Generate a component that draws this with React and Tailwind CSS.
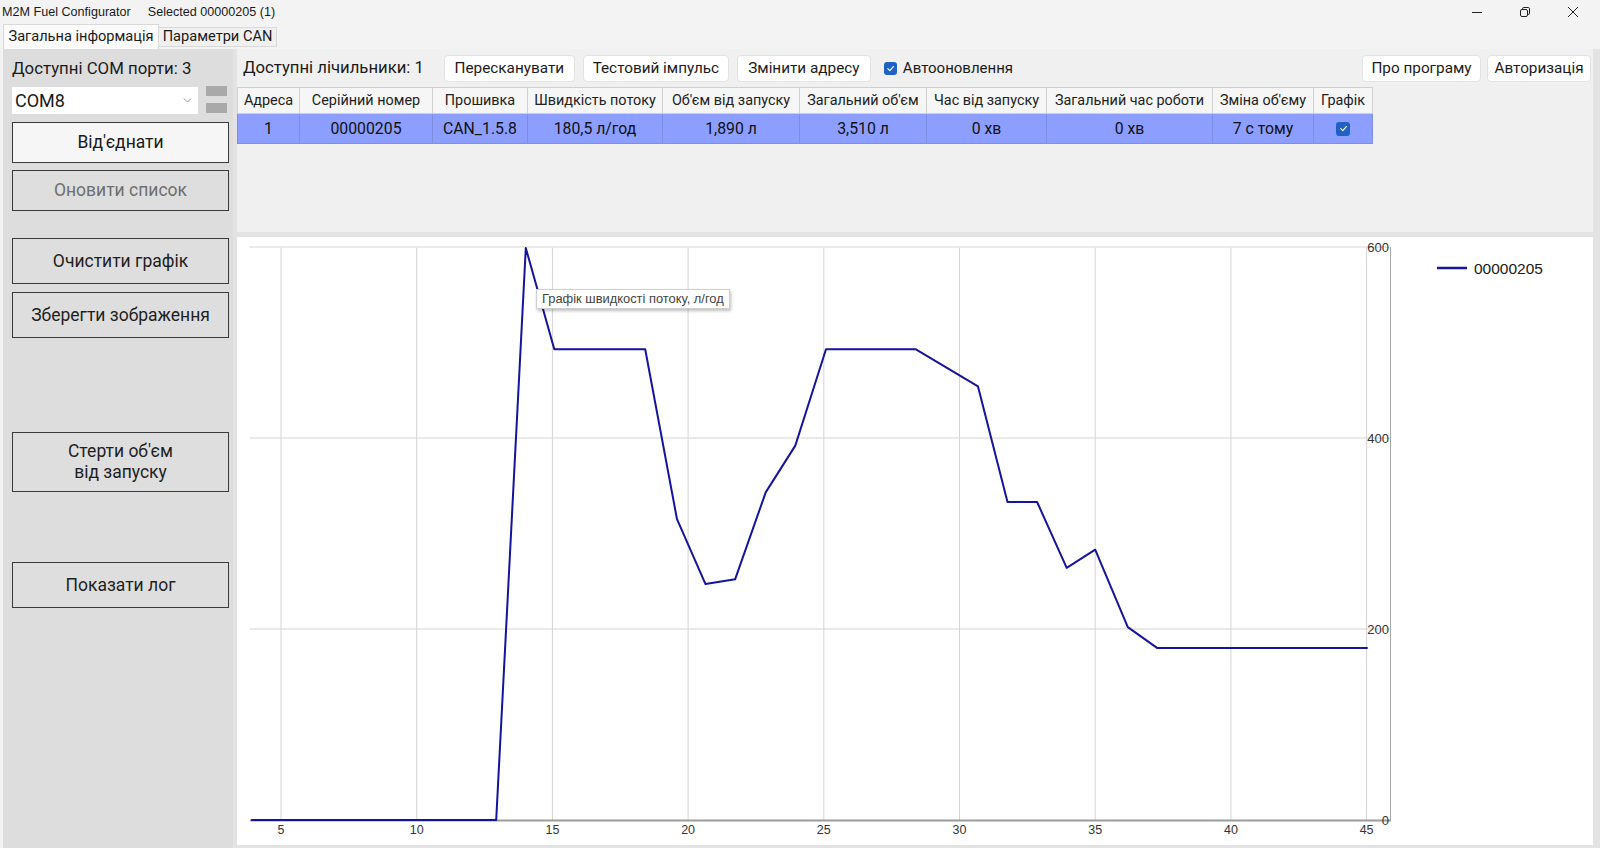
import { ChevronDown } from "lucide-react";

const columns = [
  { title: "Адреса", w: 62, value: "1" },
  { title: "Серійний номер", w: 133, value: "00000205" },
  { title: "Прошивка", w: 95, value: "CAN_1.5.8" },
  { title: "Швидкість потоку", w: 135, value: "180,5 л/год" },
  { title: "Об'єм від запуску", w: 137, value: "1,890 л" },
  { title: "Загальний об'єм", w: 127, value: "3,510 л" },
  { title: "Час від запуску", w: 120, value: "0 хв" },
  { title: "Загальний час роботи", w: 166, value: "0 хв" },
  { title: "Зміна об'єму", w: 101, value: "7 с тому" },
  { title: "Графік", w: 59, value: null },
];

// flow rate samples (x = seconds, y = l/h)
const samples = [
  [3.9, 0], [12.93, 0], [14.02, 599], [15.07, 493], [18.42, 493], [19.59, 315],
  [20.64, 247], [21.73, 252], [22.86, 343], [23.95, 392], [25.08, 493], [28.38, 493],
  [30.68, 454], [31.77, 333], [32.86, 333], [33.95, 264], [35.0, 283], [36.2, 202],
  [37.29, 180], [45.04, 180],
];

const px = (v) => 44 + (v - 5) * 27.14;
const py = (val) => 583 - val * 0.955;

function Check({ size = 13 }) {
  return (
    <div
      className="rounded-[3px] bg-[#1f62c4] flex items-center justify-center"
      style={{ width: size, height: size }}
    >
      <svg width="9" height="9" viewBox="0 0 10 10" fill="none">
        <path d="M2 5.2 L4.2 7.3 L8.2 2.8" stroke="white" strokeWidth="1.3" strokeLinecap="round" strokeLinejoin="round" />
      </svg>
    </div>
  );
}

function SideButton({ className = "", children, light, disabled }) {
  return (
    <button
      type="button"
      className={
        "w-[217px] border border-[#3a3a3a] flex items-center justify-center text-[17.5px] leading-[21px] text-center " +
        (light ? "bg-[#f6f6f6] text-[#1a1a1a] " : "bg-[#dedede] text-[#1f1f1f] ") +
        (disabled ? "!text-[#6e6e6e] " : "") +
        className
      }
    >
      {children}
    </button>
  );
}

function ToolButton({ w, children }) {
  return (
    <button
      type="button"
      className="h-[27px] bg-white rounded-[4px] border border-[#e2e2e2] text-[15.3px] text-[#1b1b1b] flex items-center justify-center"
      style={{ width: w }}
    >
      {children}
    </button>
  );
}

function Chart() {
  const xTicks = [5, 10, 15, 20, 25, 30, 35, 40, 45];
  const yTicks = [600, 400, 200];
  const d = samples.map(([v, val], i) => `${i ? "L" : "M"}${px(v).toFixed(1)} ${py(val).toFixed(1)}`).join(" ");
  return (
    <div className="relative h-[608px] w-[1356px] bg-white">
      <svg width="1356" height="608" className="block">
        {xTicks.map((t) => (
          <line key={t} x1={px(t)} x2={px(t)} y1={10.5} y2={583} stroke="#d4d4d4" strokeWidth="1" />
        ))}
        {yTicks.map((t) => (
          <line key={t} x1={13} x2={1153} y1={py(t)} y2={py(t)} stroke="#d4d4d4" strokeWidth="1" />
        ))}
        <line x1={1153.5} x2={1153.5} y1={10} y2={584} stroke="#a8a8a8" strokeWidth="1" />
        <line x1={13} x2={1154} y1={583.5} y2={583.5} stroke="#9c9c9c" strokeWidth="2" />
        {xTicks.map((t) => (
          <text key={t} x={px(t)} y={597} textAnchor="middle" fontSize="12.5" fill="#333" fontFamily="Liberation Sans, sans-serif">
            {t}
          </text>
        ))}
        {[600, 400, 200, 0].map((t) => (
          <text key={t} x={1152} y={py(t) + 4.5} textAnchor="end" fontSize="13" fill="#333" fontFamily="Liberation Sans, sans-serif">
            {t}
          </text>
        ))}
        <path d={d} fill="none" stroke="#14149c" strokeWidth="2" strokeLinejoin="round" />
        <line x1={1200} x2={1230} y1={31} y2={31} stroke="#14149c" strokeWidth="2.5" />
        <text x={1237} y={36.5} fontSize="15.5" fill="#1a1a1a" fontFamily="Liberation Sans, sans-serif">
          00000205
        </text>
      </svg>
      <div className="absolute left-[299px] top-[52px] h-[20px] bg-white border border-[#cfcfcf] shadow-[1px_2px_3px_rgba(0,0,0,0.25)] px-[5px] flex items-center text-[12.9px] text-[#444] font-['Liberation_Sans',sans-serif] whitespace-nowrap">
        Графік швидкості потоку, л/год
      </div>
    </div>
  );
}

export default function App() {
  return (
    <div className="w-[1600px] h-[848px] bg-[#f3f3f3] flex flex-col overflow-hidden font-['Roboto',sans-serif] text-[#1a1a1a]">
      {/* title bar */}
      <div className="h-[24px] flex items-center text-[12.6px] text-[#1a1a1a] font-['Liberation_Sans',sans-serif]">
        <span className="ml-[2px]">M2M Fuel Configurator</span>
        <span className="ml-[17px]">Selected 00000205 (1)</span>
        <div className="ml-auto mr-[3px] flex">
          <div className="w-[48px] h-[24px] flex items-center justify-center">
            <svg width="10" height="10" viewBox="0 0 10 10">
              <line x1="0" x2="10" y1="5.5" y2="5.5" stroke="#222" strokeWidth="1" />
            </svg>
          </div>
          <div className="w-[48px] h-[24px] flex items-center justify-center">
            <svg width="10" height="10" viewBox="0 0 10 10" fill="none" stroke="#222" strokeWidth="1">
              <rect x="0.5" y="2.5" width="7" height="7" rx="1.5" />
              <path d="M2.5 2.5 V1.8 a1.3 1.3 0 0 1 1.3 -1.3 H8.2 a1.3 1.3 0 0 1 1.3 1.3 V6.2 a1.3 1.3 0 0 1 -1.3 1.3 H7.5" />
            </svg>
          </div>
          <div className="w-[48px] h-[24px] flex items-center justify-center">
            <svg width="10" height="10" viewBox="0 0 10 10" stroke="#222" strokeWidth="1">
              <line x1="0" y1="0" x2="10" y2="10" />
              <line x1="10" y1="0" x2="0" y2="10" />
            </svg>
          </div>
        </div>
      </div>

      {/* tabs */}
      <div className="h-[25px] flex items-end pl-[3px] text-[14.6px]">
        <div className="h-[25px] w-[156px] bg-[#fbfbfb] border border-b-0 border-[#d9d9d9] flex items-center justify-center">
          Загальна інформація
        </div>
        <div className="h-[20px] mb-[2px] w-[118px] bg-[#f0f0f0] border border-l-0 border-[#d9d9d9] flex items-center justify-center">
          Параметри CAN
        </div>
      </div>

      {/* content */}
      <div className="h-[799px] flex pl-[3px]">
        {/* left panel */}
        <div className="w-[230px] bg-[#dddddd] pl-[9px] pt-[9px] flex flex-col">
          <div className="h-[20px] leading-[20px] text-[16.8px] text-[#1a1a1a] whitespace-nowrap">Доступні COM порти: 3</div>
          <div className="mt-[9px] flex items-start">
            <div className="w-[186px] h-[27px] bg-white flex items-center pl-[3px] pr-[4px] text-[18px]">
              <span>COM8</span>
              <ChevronDown size={13} strokeWidth={1.3} className="ml-auto text-[#666]" />
            </div>
            <div className="ml-[8px] -mt-[1px] flex flex-col gap-[7px]">
              <div className="w-[21px] h-[10px] bg-[#a9a9a9]" />
              <div className="w-[21px] h-[10px] bg-[#a9a9a9]" />
            </div>
          </div>
          <SideButton light className="mt-[8px] h-[41px]">Від'єднати</SideButton>
          <SideButton disabled className="mt-[7px] h-[41px]">Оновити список</SideButton>
          <SideButton className="mt-[27px] h-[46px]">Очистити графік</SideButton>
          <SideButton className="mt-[8px] h-[46px]">Зберегти зображення</SideButton>
          <SideButton className="mt-[94px] h-[60px]">
            Стерти об'єм
            <br />
            від запуску
          </SideButton>
          <SideButton className="mt-[70px] h-[46px]">Показати лог</SideButton>
        </div>

        {/* right side */}
        <div className="flex-1 bg-[#e3e3e3] pl-[4px] pr-[7px] pb-[3px] flex flex-col gap-[5px]">
          <div className="h-[183px] bg-[#f0f0f0] flex flex-col">
            <div className="h-[38px] flex items-center">
              <span className="ml-[6px] text-[16.7px] text-[#1a1a1a] whitespace-nowrap">Доступні лічильники: 1</span>
              <div className="ml-[20px] flex items-center gap-[8px]">
                <ToolButton w={131}>Пересканувати</ToolButton>
                <ToolButton w={146}>Тестовий імпульс</ToolButton>
                <ToolButton w={134}>Змінити адресу</ToolButton>
              </div>
              <div className="ml-[13px] flex items-center">
                <Check />
                <span className="ml-[6px] text-[15px]">Автооновлення</span>
              </div>
              <div className="ml-auto mr-[2px] flex items-center gap-[6px]">
                <ToolButton w={119}>Про програму</ToolButton>
                <ToolButton w={104}>Авторизація</ToolButton>
              </div>
            </div>
            <div className="flex flex-col w-[1136px]">
              <div className="flex h-[27px] bg-[#f6f6f6] border-t border-l border-[#d0d0d0]">
                {columns.map((c) => (
                  <div
                    key={c.title}
                    className="border-r border-b border-[#d0d0d0] flex items-center justify-center text-[14.4px] text-[#222] whitespace-nowrap"
                    style={{ width: c.w }}
                  >
                    {c.title}
                  </div>
                ))}
              </div>
              <div className="flex h-[30px] bg-[#8c9eff] border-l border-b border-[#7e8ee0]">
                {columns.map((c) => (
                  <div
                    key={c.title}
                    className="border-r border-[#7e8ee0] flex items-center justify-center text-[15.8px] text-[#111] whitespace-nowrap"
                    style={{ width: c.w }}
                  >
                    {c.value === null ? <Check size={14} /> : c.value}
                  </div>
                ))}
              </div>
            </div>
          </div>
          <Chart />
        </div>
      </div>
    </div>
  );
}
